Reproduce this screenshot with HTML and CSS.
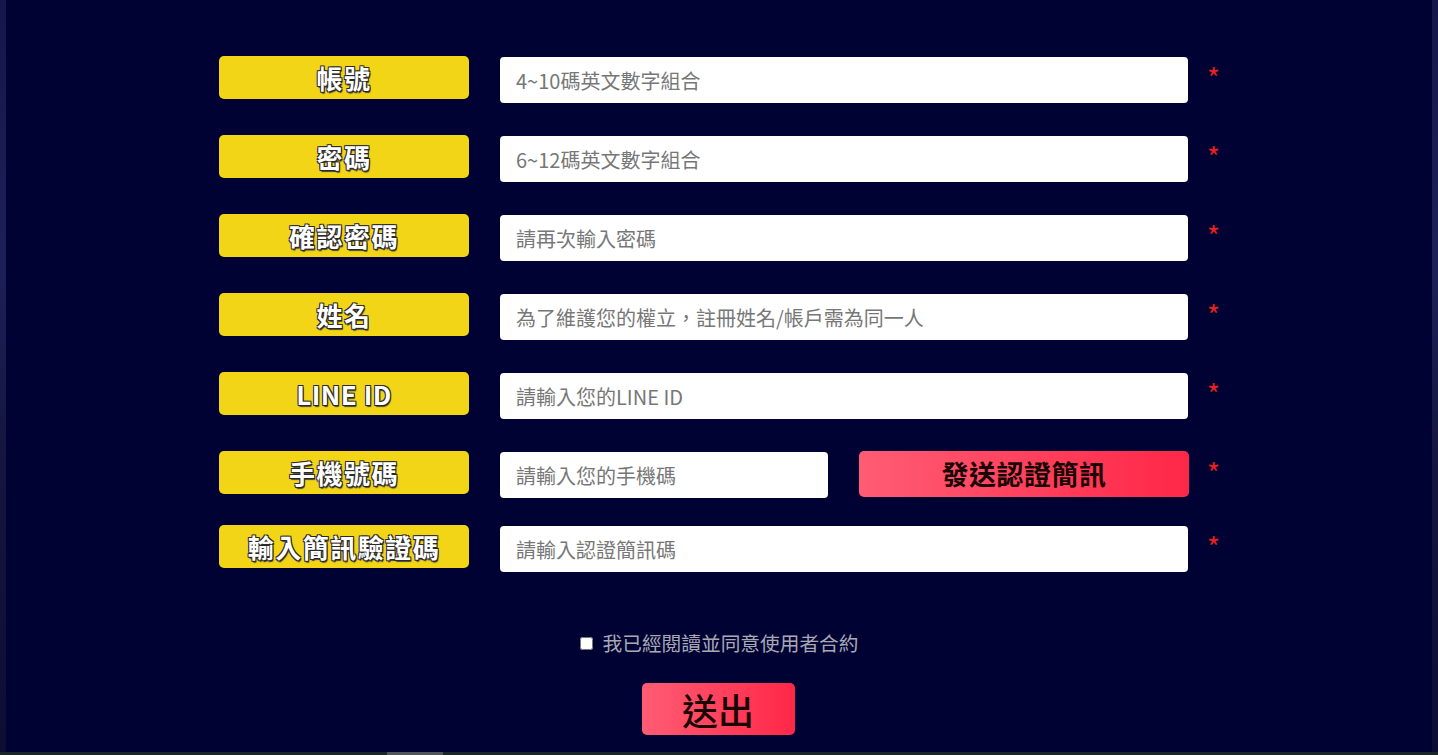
FILE: index.html
```html
<!DOCTYPE html>
<html lang="zh-Hant">
<head>
  <meta charset="UTF-8">
  <meta name="viewport" content="width=device-width, initial-scale=1.0">
  <title>會員註冊</title>
  <link rel="stylesheet" href="styles.css">
</head>
<body>
  <div class="page">
    <form class="register-form">
      <div class="form-row">
        <label class="field-label">帳號</label>
        <input class="field-input" type="text" placeholder="4~10碼英文數字組合">
        <span class="required">*</span>
      </div>
      <div class="form-row">
        <label class="field-label">密碼</label>
        <input class="field-input" type="password" placeholder="6~12碼英文數字組合">
        <span class="required">*</span>
      </div>
      <div class="form-row">
        <label class="field-label">確認密碼</label>
        <input class="field-input" type="password" placeholder="請再次輸入密碼">
        <span class="required">*</span>
      </div>
      <div class="form-row">
        <label class="field-label">姓名</label>
        <input class="field-input" type="text" placeholder="為了維護您的權立，註冊姓名/帳戶需為同一人">
        <span class="required">*</span>
      </div>
      <div class="form-row">
        <label class="field-label label-latin">LINE ID</label>
        <input class="field-input" type="text" placeholder="請輸入您的LINE ID">
        <span class="required">*</span>
      </div>
      <div class="form-row form-row-phone">
        <label class="field-label">手機號碼</label>
        <div class="phone-group">
          <input class="field-input phone-input" type="text" placeholder="請輸入您的手機碼">
          <button class="sms-button" type="button">發送認證簡訊</button>
        </div>
        <span class="required">*</span>
      </div>
      <div class="form-row">
        <label class="field-label">輸入簡訊驗證碼</label>
        <input class="field-input" type="text" placeholder="請輸入認證簡訊碼">
        <span class="required">*</span>
      </div>

      <div class="agree">
        <input type="checkbox" id="agree-check">
        <label for="agree-check">我已經閱讀並同意使用者合約</label>
      </div>

      <div class="submit-wrap">
        <button class="submit-button" type="submit">送出</button>
      </div>
    </form>
  </div>
  <div class="bottom-strip"></div>
</body>
</html>
```

FILE: styles.css
```css
body {
  margin: 0;
  padding: 0;
  height: 755px;
  overflow: hidden;
  background: linear-gradient(180deg, #15174a 0%, #1d2058 35%, #14163f 60%, #0b0d33 100%);
  font-family: "Noto Sans CJK TC", "Noto Sans", sans-serif;
}
.page {
  margin: 0 6px;
  height: 752px;
  background-color: #000234;
}
.register-form {
  width: 1000px;
  margin: 0 auto;
  padding-top: 56px;
}
.form-row {
  display: flex;
  align-items: flex-start;
  height: 47px;
  margin-bottom: 32px;
}
.form-row-phone {
  margin-bottom: 27px;
}
.field-label {
  width: 250px;
  height: 43px;
  flex-shrink: 0;
  margin-right: 31px;
  border-radius: 5px;
  background-color: #f2d516;
  color: #fff;
  font-size: 26px;
  font-weight: bold;
  letter-spacing: 1.5px;
  line-height: 43px;
  text-align: center;
  text-shadow: 1px 1px 0 #2a2a2a, -1px -1px 0 #2a2a2a, 1px -1px 0 #2a2a2a, -1px 1px 0 #2a2a2a, 1px 2px 1px #444;
}
.label-latin {
  letter-spacing: 0.5px;
}
.field-input {
  width: 688px;
  height: 46px;
  flex-shrink: 0;
  margin-top: 1px;
  box-sizing: border-box;
  padding: 0 16px;
  border: none;
  border-radius: 4px;
  background-color: #fff;
  font-family: inherit;
  font-size: 20px;
  color: #333;
  outline: none;
}
.field-input::placeholder {
  color: #777;
}
.phone-group {
  width: 689px;
  flex-shrink: 0;
  margin-right: -1px;
  display: flex;
  justify-content: space-between;
  align-items: flex-start;
}
.phone-input {
  width: 328px;
}
.sms-button {
  width: 330px;
  height: 46px;
  border: none;
  border-radius: 5px;
  background: linear-gradient(90deg, #ff5c74, #ff2747);
  color: #1a0505;
  font-family: inherit;
  font-size: 27px;
  font-weight: bold;
  letter-spacing: 0.5px;
  line-height: 46px;
  padding: 0;
  cursor: pointer;
}
.required {
  padding-left: 19px;
  padding-top: 6px;
  color: #e8201e;
  font-size: 28px;
  line-height: 30px;
}
.agree {
  display: flex;
  align-items: center;
  justify-content: center;
  margin-top: 56px;
  color: #a9a9b4;
  font-size: 19.7px;
  line-height: 30px;
}
.agree input {
  width: 13px;
  height: 13px;
  margin: 0 10px 0 0;
}
.submit-wrap {
  display: flex;
  justify-content: center;
  margin-top: 25px;
  margin-left: -2px;
}
.submit-button {
  width: 153px;
  height: 52px;
  border: none;
  border-radius: 5px;
  background: linear-gradient(90deg, #ff5c74, #ff2747);
  color: #1a0505;
  font-family: inherit;
  font-size: 36px;
  font-weight: 500;
  line-height: 52px;
  padding: 0;
  cursor: pointer;
}
.bottom-strip {
  height: 3px;
  background: linear-gradient(90deg, #1a2628 0, #1a2628 387px, #4f5558 387px, #4f5558 443px, #1a2628 443px);
}
```
